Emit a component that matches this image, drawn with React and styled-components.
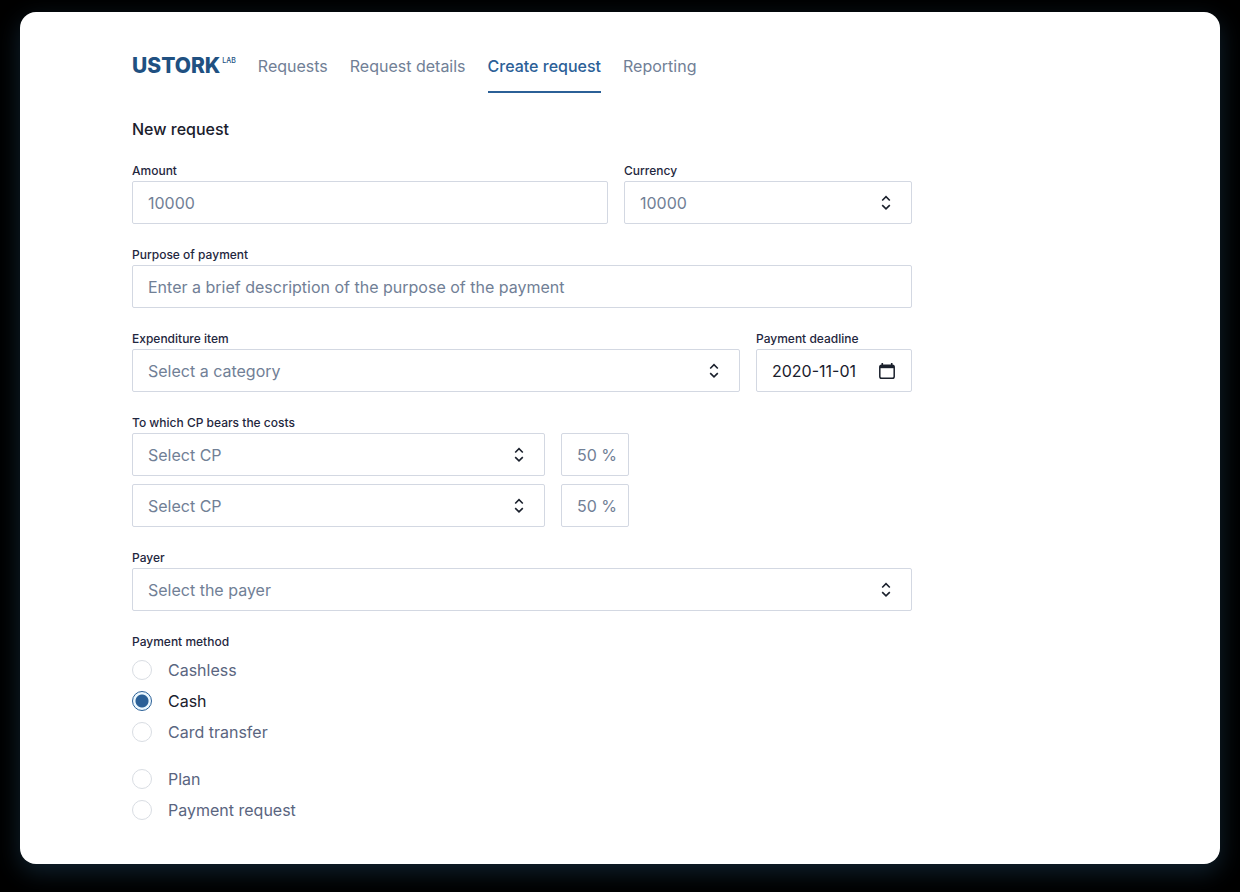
import React, { useState } from "react";
import styled, { createGlobalStyle, css } from "styled-components";

const links = ["Requests", "Request details", "Create request", "Reporting"];
const methods = ["Cashless", "Cash", "Card transfer"];
const kinds = ["Plan", "Payment request"];

const ArrowsIcon = () => (
  <Arrows viewBox="0 0 10 16" aria-hidden="true">
    <path d="M1.2 5.5 5 1.7l3.8 3.8M1.2 10.1 5 13.9l3.8-3.8" />
  </Arrows>
);

const CalendarIcon = () => (
  <svg width="16" height="16" viewBox="0 0 16 16" fill="none" aria-hidden="true">
    <rect x="0.8" y="2.3" width="14.4" height="12.9" rx="1.8" stroke="currentColor" strokeWidth="1.5" />
    <path d="M1 2h14v3.2H1z" fill="currentColor" />
    <path d="M3.3 0v3M12.7 0v3" stroke="currentColor" strokeWidth="1.6" />
  </svg>
);

const SelectField = ({ id, label, placeholder }) => (
  <SelectBox>
    <Select id={id} aria-label={label} defaultValue="">
      <option value="">{placeholder}</option>
    </Select>
    <ArrowsIcon />
  </SelectBox>
);

const RadioGroup = ({ items, value, onChange }) => (
  <RadioList>
    {items.map((item) => (
      <RadioLabel key={item}>
        <Radio
          type="radio"
          name="method"
          checked={value === item}
          onChange={() => onChange(item)}
        />
        <RadioText>{item}</RadioText>
      </RadioLabel>
    ))}
  </RadioList>
);

const App = () => {
  const [method, setMethod] = useState("Cash");
  return (
    <>
      <GlobalStyle />
      <Card>
        <Header>
          <Logo href="#">
            USTORK<LogoMark>LAB</LogoMark>
          </Logo>
          <Nav>
            {links.map((link) => (
              <NavLink key={link} href="#" $active={link === "Create request"}>
                {link}
              </NavLink>
            ))}
          </Nav>
        </Header>
        <Title>New request</Title>
        <Form>
          <Row $columns="minmax(0, 1fr) 288px">
            <div>
              <Label htmlFor="amount">Amount</Label>
              <Input id="amount" placeholder="10000" />
            </div>
            <div>
              <Label htmlFor="currency">Currency</Label>
              <SelectField id="currency" placeholder="10000" />
            </div>
          </Row>
          <div>
            <Label htmlFor="purpose">Purpose of payment</Label>
            <Input
              id="purpose"
              placeholder="Enter a brief description of the purpose of the payment"
            />
          </div>
          <Row $columns="minmax(0, 1fr) 156px">
            <div>
              <Label htmlFor="item">Expenditure item</Label>
              <SelectField id="item" placeholder="Select a category" />
            </div>
            <div>
              <Label htmlFor="deadline">Payment deadline</Label>
              <DateBox>
                <DateInput id="deadline" defaultValue="2020-11-01" />
                <DateButton type="button" aria-label="Open calendar">
                  <CalendarIcon />
                </DateButton>
              </DateBox>
            </div>
          </Row>
          <div>
            <Label htmlFor="cp">To which CP bears the costs</Label>
            <CostList>
              <Row $columns="minmax(0, 413px) 68px">
                <SelectField id="cp" placeholder="Select CP" />
                <ShareInput aria-label="First CP share" placeholder="50 %" />
              </Row>
              <Row $columns="minmax(0, 413px) 68px">
                <SelectField label="Second CP" placeholder="Select CP" />
                <ShareInput aria-label="Second CP share" placeholder="50 %" />
              </Row>
            </CostList>
          </div>
          <div>
            <Label htmlFor="payer">Payer</Label>
            <SelectField id="payer" placeholder="Select the payer" />
          </div>
          <Fieldset>
            <Legend>Payment method</Legend>
            <RadioGroups>
              <RadioGroup items={methods} value={method} onChange={setMethod} />
              <RadioGroup items={kinds} value={method} onChange={setMethod} />
            </RadioGroups>
          </Fieldset>
        </Form>
      </Card>
    </>
  );
};

const GlobalStyle = createGlobalStyle`
  * {
    box-sizing: border-box;
  }
  body {
    margin: 0;
    padding: 12px 20px 28px;
    background: #000;
    font-family: Inter, "Liberation Sans", sans-serif;
    font-size: 16px;
    line-height: 24px;
    color: #1a202c;
  }
`;
const Card = styled.main`
  background: #fff;
  border-radius: 16px;
  padding: 42px 112px 44px;
  box-shadow: 0 8px 24px #10222f;
`;
const Header = styled.header`
  display: flex;
  align-items: flex-start;
  gap: 22px;
`;
const Logo = styled.a`
  display: flex;
  font-weight: 800;
  font-size: 21px;
  line-height: 24px;
  color: #205081;
  text-decoration: none;
`;
const LogoMark = styled.span`
  margin-left: 2px;
  font-weight: 500;
  font-size: 7px;
  line-height: 14px;
`;
const Nav = styled.nav`
  display: flex;
  gap: 22px;
`;
const NavLink = styled.a`
  padding-bottom: 13px;
  border-bottom: 2px solid transparent;
  color: #718096;
  text-decoration: none;
  white-space: nowrap;

  ${p => p.$active && css`
    border-color: #2b6097;
    color: #2b6097;
    font-weight: 500;
  `}
`;
const Title = styled.h1`
  margin: 24px 0 20px;
  font-weight: 500;
  font-size: 16px;
  line-height: 24px;
`;
const Form = styled.form`
  display: flex;
  flex-direction: column;
  gap: 21px;
  max-width: 780px;
`;
const Row = styled.div`
  display: grid;
  grid-template-columns: ${p => p.$columns};
  gap: 16px;
`;
const labelText = css`
  display: block;
  padding: 0;
  font-weight: 500;
  font-size: 12px;
  line-height: 20px;
  color: #1f2740;
`;
const Label = styled.label`
  ${labelText}
`;
const Legend = styled.legend`
  ${labelText}
`;
const field = css`
  display: block;
  width: 100%;
  height: 43px;
  padding: 0 15px;
  border: 1px solid #d3d8e2;
  border-radius: 2px;
  background: #fff;
  font: inherit;
  color: #718096;
`;
const Input = styled.input`
  ${field}

  &::placeholder {
    color: #718096;
    opacity: 1;
  }
`;
const ShareInput = styled(Input)`
  padding-right: 8px;
`;
const SelectBox = styled.div`
  position: relative;
`;
const Select = styled.select`
  ${field}
  padding-right: 40px;
  appearance: none;
`;
const Arrows = styled.svg`
  position: absolute;
  top: 14px;
  right: 21px;
  width: 10px;
  height: 16px;
  fill: none;
  stroke: #1a202c;
  stroke-width: 1.6;
  pointer-events: none;
`;
const DateBox = styled.div`
  ${field}
  display: flex;
  align-items: center;
  justify-content: space-between;
  padding-right: 16px;
`;
const DateInput = styled.input`
  flex: 1;
  min-width: 0;
  padding: 0;
  border: 0;
  background: none;
  font: inherit;
  color: #1a202c;
`;
const DateButton = styled.button`
  display: flex;
  padding: 0;
  border: 0;
  background: none;
  color: #1a202c;
`;
const CostList = styled.div`
  display: grid;
  gap: 8px;
`;
const Fieldset = styled.fieldset`
  margin: 0;
  padding: 0;
  border: 0;
`;
const RadioGroups = styled.div`
  display: grid;
  gap: 27px;
  padding-top: 8px;
`;
const RadioList = styled.div`
  display: grid;
  justify-items: start;
  gap: 11px;
`;
const RadioLabel = styled.label`
  display: flex;
  align-items: center;
  gap: 16px;
  line-height: 20px;
`;
const RadioText = styled.span`
  color: #5a6580;
`;
const Radio = styled.input`
  width: 20px;
  height: 20px;
  margin: 0;
  border: 1px solid #d9dde3;
  border-radius: 50%;
  appearance: none;

  &:checked {
    border-color: #2b6097;
    background: radial-gradient(circle, #2b6097 6px, #ebf8ff 7px);
  }

  &:checked + ${RadioText} {
    color: #1a202c;
  }
`;

export default App;
